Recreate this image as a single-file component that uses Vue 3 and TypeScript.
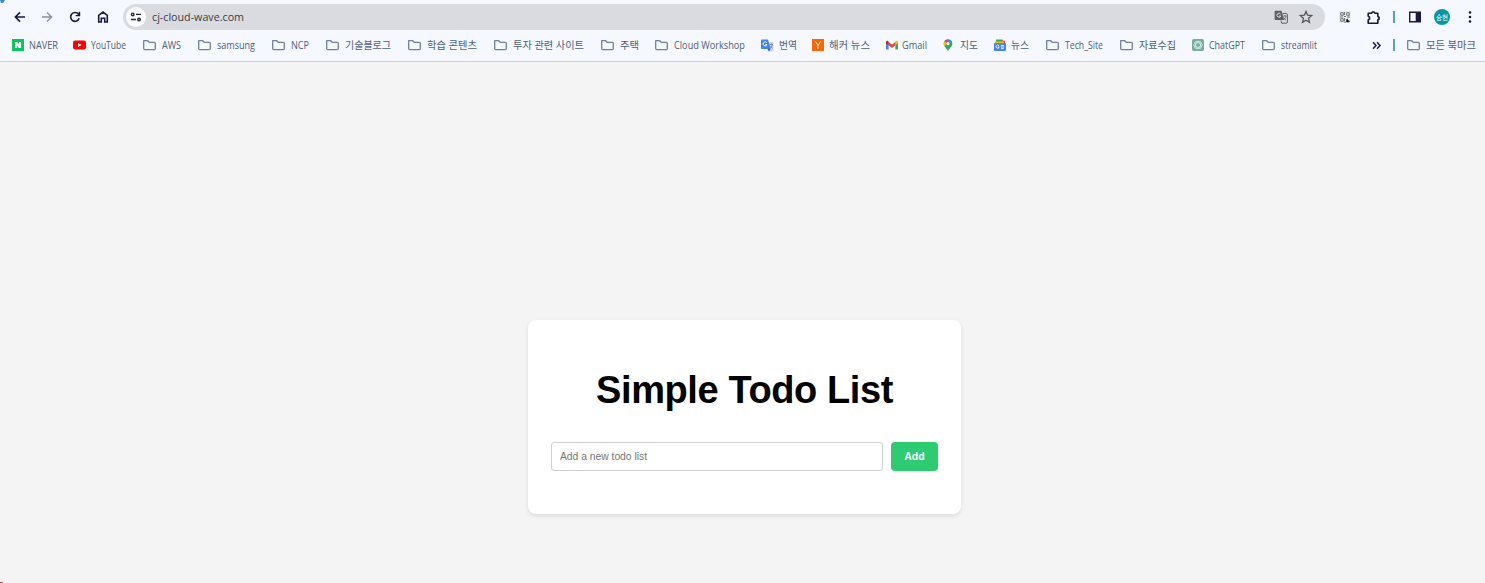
<script setup lang="ts">
import { ref } from 'vue'

interface Bookmark {
  label: string
  icon: string
  // distance to the next bookmark, label inset and label length
  slot: number
  inset: number
  length: number
}

const bookmarks: Bookmark[] = [
  { label: 'NAVER', icon: 'naver', slot: 61, inset: 17, length: 29 },
  { label: 'YouTube', icon: 'youtube', slot: 70, inset: 18, length: 35 },
  { label: 'AWS', icon: 'folder', slot: 55, inset: 19, length: 19 },
  { label: 'samsung', icon: 'folder', slot: 74, inset: 19, length: 38 },
  { label: 'NCP', icon: 'folder', slot: 54, inset: 19, length: 18 },
  { label: '기술블로그', icon: 'folder', slot: 82, inset: 19, length: 46 },
  { label: '학습 콘텐츠', icon: 'folder', slot: 86, inset: 19, length: 50 },
  { label: '투자 관련 사이트', icon: 'folder', slot: 107, inset: 19, length: 71 },
  { label: '주택', icon: 'folder', slot: 54, inset: 19, length: 19 },
  { label: 'Cloud Workshop', icon: 'folder', slot: 106, inset: 19, length: 71 },
  { label: '번역', icon: 'translate', slot: 51, inset: 18, length: 18 },
  { label: '해커 뉴스', icon: 'hacker', slot: 74, inset: 17, length: 41 },
  { label: 'Gmail', icon: 'gmail', slot: 57, inset: 16, length: 25 },
  { label: '지도', icon: 'maps', slot: 51, inset: 17, length: 18 },
  { label: '뉴스', icon: 'news', slot: 52, inset: 17, length: 18 },
  { label: 'Tech_Site', icon: 'folder', slot: 74, inset: 19, length: 38 },
  { label: '자료수집', icon: 'folder', slot: 72, inset: 19, length: 37 },
  { label: 'ChatGPT', icon: 'gpt', slot: 70, inset: 17, length: 36 },
  { label: 'streamlit', icon: 'folder', slot: 57, inset: 19, length: 36 },
]

const draft = ref('')
</script>

<template>
  <div class="window">
    <header class="chrome">
      <svg class="corner" width="6" height="4" viewBox="0 0 6 4"><path d="M0 0h5L3 3H1z" fill="#3b86df" /></svg>
      <div class="toolbar">
        <nav class="nav">
          <svg viewBox="0 0 14 14"><path d="M12 7H2.7M7 2.4 2.4 7 7 11.6" class="ink" /></svg>
          <svg viewBox="0 0 14 14"><path d="M2 7h9.3M7 2.4 11.6 7 7 11.6" class="dim" /></svg>
          <svg viewBox="0 0 14 14"><path d="M11.2 8.3A4.4 4.4 0 1 1 10.5 4.2L11.6 5.5" class="ink" /><path d="M12.2 1.8v4.5H7.7V5h2.9V1.8z" fill="#1d1447" /></svg>
          <svg viewBox="0 0 14 14"><path d="M2.7 12V5.4L7 2.1l4.3 3.3V12H8.7V8.2H5.3V12z" class="ink" /></svg>
        </nav>
        <div class="address">
          <span class="site">
            <svg width="12" height="10" viewBox="0 0 12 10" fill="none" stroke="#25252b" stroke-width="1.4"><circle cx="2.7" cy="2.4" r="1.3" /><path d="M6 2.4h5M1 7.5h5" /><circle cx="9" cy="7.5" r="1.3" /></svg>
          </span>
          <svg class="url" width="100" height="22"><text x="0" y="14.5" textLength="92" lengthAdjust="spacingAndGlyphs">cj-cloud-wave.com</text></svg>
          <svg class="lang" width="14" height="14" viewBox="0 0 14 14">
            <path d="M1.5.8h6L10.2 10H1.5Q.6 10 .6 9V1.8Q.6.8 1.5.8z" fill="#5e5f64" />
            <path d="M8.4 3.5h4q1 0 1 1v7.7q0 1-1 1H7.7L7 10.5" fill="none" stroke="#5e5f64" />
            <path d="M6.6 4A2 2 0 1 0 6.8 6H5" fill="none" stroke="#e1e2e6" />
            <path d="M9.2 6h3.5M11 5v1M12 6q-.4 2.5-2.6 4M9.6 7.4q.8 1.8 2.5 3" fill="none" stroke="#5e5f64" stroke-width=".8" />
          </svg>
          <svg class="star" width="14" height="14" viewBox="0 0 14 14"><path d="m7 1.4 1.6 3.8 4.1.4-3.1 2.7.9 4L7 10.2l-3.5 2.1.9-4-3.1-2.7 4.1-.4z" fill="none" stroke="#57585e" stroke-width="1.3" /></svg>
        </div>
        <svg class="qr" width="12" height="12" viewBox="0 0 12 12">
          <path d="M0 0h12v12H0z" fill="#eceded" />
          <path d="M1.7 1.7h2.6v2.6H1.7zM7.7 1.7h2.6v2.6H7.7zM1.7 7.7h2.6v2.6H1.7z" fill="none" stroke="#66666a" stroke-width=".9" />
          <path d="M5.5 1v3M1 6h3M5 5.5h2M8 6h3M5.5 7v3M5 11h2" stroke="#66666a" stroke-width=".9" />
          <path d="M8.5 7.5q0 2 2.5 2.5l-1 1.2H7.2V8.5z" fill="#17171a" />
        </svg>
        <svg class="puzzle" width="15" height="15" viewBox="0 0 15 15"><path d="M2.2 3.2h3.2l1-1.2h1.6l1 1.2h2.8v3.1l1.3 1v1.7l-1.3 1v3.2H2.2V10l1.3-1V7.2l-1.3-1z" fill="none" stroke="#1d1447" stroke-width="1.6" stroke-linejoin="round" /></svg>
        <i class="divider"></i>
        <svg class="panel" width="12" height="12" viewBox="0 0 12 12"><path d="M.7 1.2h10.6v9.6H.7z" fill="none" stroke="#1d1447" stroke-width="1.4" /><path d="M6.7 1H12v10H6.7z" fill="#1d1447" /></svg>
        <span class="avatar">승현</span>
        <svg class="more" width="4" height="14" viewBox="0 0 4 14" fill="#1d1447"><circle cx="2" cy="2.5" r="1.3" /><circle cx="2" cy="7" r="1.3" /><circle cx="2" cy="11.5" r="1.3" /></svg>
      </div>

      <div class="bookmarks">
        <div v-for="b in bookmarks" :key="b.label" class="bookmark" :style="{ width: b.slot + 'px' }">
          <span class="mark" :style="{ width: b.inset + 'px' }">
            <svg v-if="b.icon === 'folder'" width="13" height="12" viewBox="0 0 13 12"><path d="M.7 1.7h4l1.5 1.6h5.1q1 0 1 1v5.3q0 1-1 1H1.7q-1 0-1-1z" class="folder" /></svg>
            <svg v-else-if="b.icon === 'naver'" width="12" height="12" viewBox="0 0 12 12"><path d="M0 0h12v12H0z" fill="#06c957" /><path d="M3 3h2.2l1.7 2.6V3H9v6H6.8L5.1 6.4V9H3z" fill="#fff" /></svg>
            <svg v-else-if="b.icon === 'youtube'" width="13" height="12" viewBox="0 0 13 12"><rect y="1.5" width="13" height="9" rx="2.2" fill="#f00" /><path d="m5 4 3.6 2L5 8z" fill="#fff" /></svg>
            <svg v-else-if="b.icon === 'translate'" width="13" height="13" viewBox="0 0 13 13">
              <path d="M5 3h6.5q1 0 1 1v7.5q0 1-1 1H8z" fill="#d5d9df" /><path d="M1 .5h6L9.7 10H1Q0 10 0 9V1.5q0-1 1-1z" fill="#4584e8" /><path d="m6.5 10 3.2 0L8 12.5z" fill="#2759bd" />
              <path d="M5.8 3.8A2 2 0 1 0 6 5.5H4.2" fill="none" stroke="#fff" stroke-width=".9" /><path d="M8.8 5.5h3M10.3 4.5v1M11.3 5.6q-.4 2.2-1.7 3.3M9.5 7l2 2.5" fill="none" stroke="#65768b" stroke-width=".8" />
            </svg>
            <svg v-else-if="b.icon === 'hacker'" width="12" height="12" viewBox="0 0 12 12"><path d="M0 0h12v12H0z" fill="#ff6600" /><path d="M3.5 2.5 6 6.6l2.5-4.1M6 6.4V10" fill="none" stroke="#ffe9d9" /></svg>
            <svg v-else-if="b.icon === 'gmail'" width="12" height="12" viewBox="0 0 12 12"><path d="M0 3h2.6v7.5H1q-1 0-1-1z" fill="#4285f4" /><path d="M9.4 3H12v6.5q0 1-1 1H9.4z" fill="#34a853" /><path d="m2.6 3 3.4 2.7L9.4 3v3.3L6 9 2.6 6.3z" fill="#ea4335" /><path d="M0 3q.2-1.6 1.6-1.2l1 .8v3.7L0 4.4z" fill="#c5221f" /><path d="M12 3q-.2-1.6-1.6-1.2l-1 .8v3.7L12 4.4z" fill="#fbbc04" /></svg>
            <svg v-else-if="b.icon === 'maps'" width="10" height="13" viewBox="0 0 10 13"><path d="M.7 4.7A4.3 4.3 0 0 1 5 .5a4.3 4.3 0 0 1 4.3 4.2C9.3 8 6 9 5 12.5 4 9 .7 8 .7 4.7z" fill="#34a853" /><path d="M.7 4.7A4.3 4.3 0 0 1 1.8 2L4 4 1.5 7.2Q.7 6 .7 4.7z" fill="#fbbc04" /><path d="M1.8 2A4.3 4.3 0 0 1 4 .6L5.7 2.8 4 4.5z" fill="#ea4335" /><path d="M4 .6a4.3 4.3 0 0 1 4.8 2.1L6 5 4.5 3.3z" fill="#4285f4" /><circle cx="5" cy="4.7" r="1.6" fill="#fff" /></svg>
            <svg v-else-if="b.icon === 'news'" width="12" height="12" viewBox="0 0 12 12"><path d="M2 .5h6.5v4H2z" fill="#34a853" /><path d="m8 1.2 3.2.7-.5 3H7z" fill="#ea4335" /><path d="M.8 2.5h9L10 5H.8z" fill="#fbbc04" /><rect y="4" width="12" height="8" rx="1" fill="#4285f4" /><path d="M5 6.8A1.6 1.6 0 1 0 5.2 8H4M7 6.5h2.8M7 8h3.2M7 9.6h2.8" fill="none" stroke="#fff" stroke-width=".9" /></svg>
            <svg v-else width="12" height="12" viewBox="0 0 12 12"><rect width="12" height="12" rx="2" fill="#75ab9c" /><g fill="none" stroke="#eaf5f1" stroke-width=".65"><ellipse cx="6" cy="6" rx="4.3" ry="2.3" /><ellipse cx="6" cy="6" rx="4.3" ry="2.3" transform="rotate(60 6 6)" /><ellipse cx="6" cy="6" rx="4.3" ry="2.3" transform="rotate(120 6 6)" /></g></svg>
          </span>
          <svg class="label" :width="b.length + 3" height="20"><text x="0" y="13.5" :textLength="b.length" lengthAdjust="spacingAndGlyphs">{{ b.label }}</text></svg>
        </div>
        <svg class="overflow" width="9" height="9" viewBox="0 0 9 9"><path d="m1 1.2 3 3.3-3 3.3M5 1.2l3 3.3-3 3.3" fill="none" stroke="#1d1447" stroke-width="1.5" /></svg>
        <i class="divider low"></i>
        <div class="bookmark all">
          <span class="mark"><svg width="13" height="12" viewBox="0 0 13 12"><path d="M.7 1.7h4l1.5 1.6h5.1q1 0 1 1v5.3q0 1-1 1H1.7q-1 0-1-1z" class="folder" /></svg></span>
          <svg class="label" width="53" height="20"><text x="0" y="13.5" textLength="50" lengthAdjust="spacingAndGlyphs">모든 북마크</text></svg>
        </div>
      </div>
    </header>

    <main class="page">
      <section class="card">
        <h1>Simple Todo List</h1>
        <form class="form" @submit.prevent>
          <input v-model="draft" type="text" placeholder="Add a new todo list" />
          <button type="submit">Add</button>
        </form>
      </section>
      <i class="speck"></i>
    </main>
  </div>
</template>

<style>
body {
  background: #f4f4f4;
  overflow: hidden;
}
</style>

<style scoped>
.window {
  display: flex;
  flex-direction: column;
  width: 1485px;
  height: 583px;
  font-family: "Liberation Sans", "Noto Sans CJK KR", sans-serif;
}
svg {
  display: block;
  flex: none;
  overflow: visible;
}
.chrome {
  position: relative;
  box-sizing: border-box;
  height: 62px;
  flex: none;
  background: #f5f9ff;
  border-bottom: 1px solid #c7cbdb;
}
.corner {
  position: absolute;
  left: 0;
  top: 0;
}
.toolbar {
  display: flex;
  align-items: center;
  height: 34px;
  padding-left: 12.5px;
}
.nav {
  display: flex;
  gap: 13.8px;
  width: 110.5px;
}
.nav svg {
  width: 14px;
  height: 14px;
}
.ink,
.dim {
  fill: none;
  stroke: #1d1447;
  stroke-width: 1.6;
}
.dim {
  stroke: #8f8ca6;
  stroke-width: 1.4;
}
.address {
  display: flex;
  align-items: center;
  box-sizing: border-box;
  width: 1202px;
  height: 26px;
  padding: 0 12px 0 3px;
  border-radius: 13px;
  background: #dadbe0;
}
.site {
  display: flex;
  align-items: center;
  justify-content: center;
  width: 20px;
  height: 20px;
  border-radius: 50%;
  background: #fbfcff;
}
.url {
  margin-left: 6px;
}
.url text {
  font: 11px "Open Sans", sans-serif;
  fill: #3b3c42;
}
.lang {
  margin-left: auto;
}
.star {
  margin-left: 11px;
}
.qr {
  margin-left: 14px;
}
.puzzle {
  margin-left: 15px;
}
.divider {
  width: 2px;
  height: 12px;
  margin-left: 11.5px;
  background: #559ce6;
}
.panel {
  margin-left: 14px;
}
.avatar {
  display: flex;
  align-items: center;
  justify-content: center;
  width: 16px;
  height: 16px;
  margin-left: 13.5px;
  border-radius: 50%;
  background: #0796a2;
  color: #fff;
  font: 6.5px/16px "Noto Sans CJK KR", sans-serif;
  white-space: nowrap;
}
.more {
  margin-left: 17.5px;
}
.bookmarks {
  display: flex;
  align-items: center;
  height: 22px;
  padding-left: 12px;
}
.bookmark {
  display: flex;
  align-items: center;
  flex: none;
}
.mark {
  flex: none;
  width: 19px;
}
.folder {
  fill: none;
  stroke: #71819b;
  stroke-width: 1.3;
  stroke-linejoin: round;
}
.label text {
  font: 10.4px "Open Sans", "Noto Sans CJK KR", sans-serif;
  fill: #4d6078;
}
.overflow {
  margin-left: 53px;
}
.low {
  margin-left: 12px;
}
.all {
  margin-left: 12px;
}
.page {
  position: relative;
  display: flex;
  flex: 1;
  justify-content: center;
  align-items: flex-start;
  padding: 258px 0 0 4px;
  box-sizing: border-box;
  background: #f4f4f4;
}
.card {
  box-sizing: border-box;
  width: 433px;
  height: 194px;
  padding: 48px 23px 0;
  border-radius: 8px;
  background: #fff;
  box-shadow: 0 2px 4px rgba(0, 0, 0, 0.1);
}
h1 {
  margin: 0 0 30px;
  color: #000;
  font-size: 38px;
  letter-spacing: -0.4px;
  line-height: 44px;
  text-align: center;
  white-space: nowrap;
}
.form {
  display: flex;
  gap: 8px;
}
input {
  box-sizing: border-box;
  flex: 1;
  min-width: 0;
  height: 29px;
  padding: 0 8px;
  border: 1px solid #d0d2d2;
  border-radius: 3px;
  background: #fff;
  font: 10.3px "Liberation Sans", sans-serif;
}
input::placeholder {
  color: #757575;
}
button {
  width: 47px;
  height: 29px;
  padding: 0 0 1px;
  border: 0;
  border-radius: 4px;
  background: #2ecc71;
  color: #fff;
  font: bold 10.5px "Liberation Sans", sans-serif;
}
.speck {
  position: absolute;
  left: 0;
  bottom: 0;
  width: 3px;
  height: 1px;
  background: #a65d5d;
}
</style>
